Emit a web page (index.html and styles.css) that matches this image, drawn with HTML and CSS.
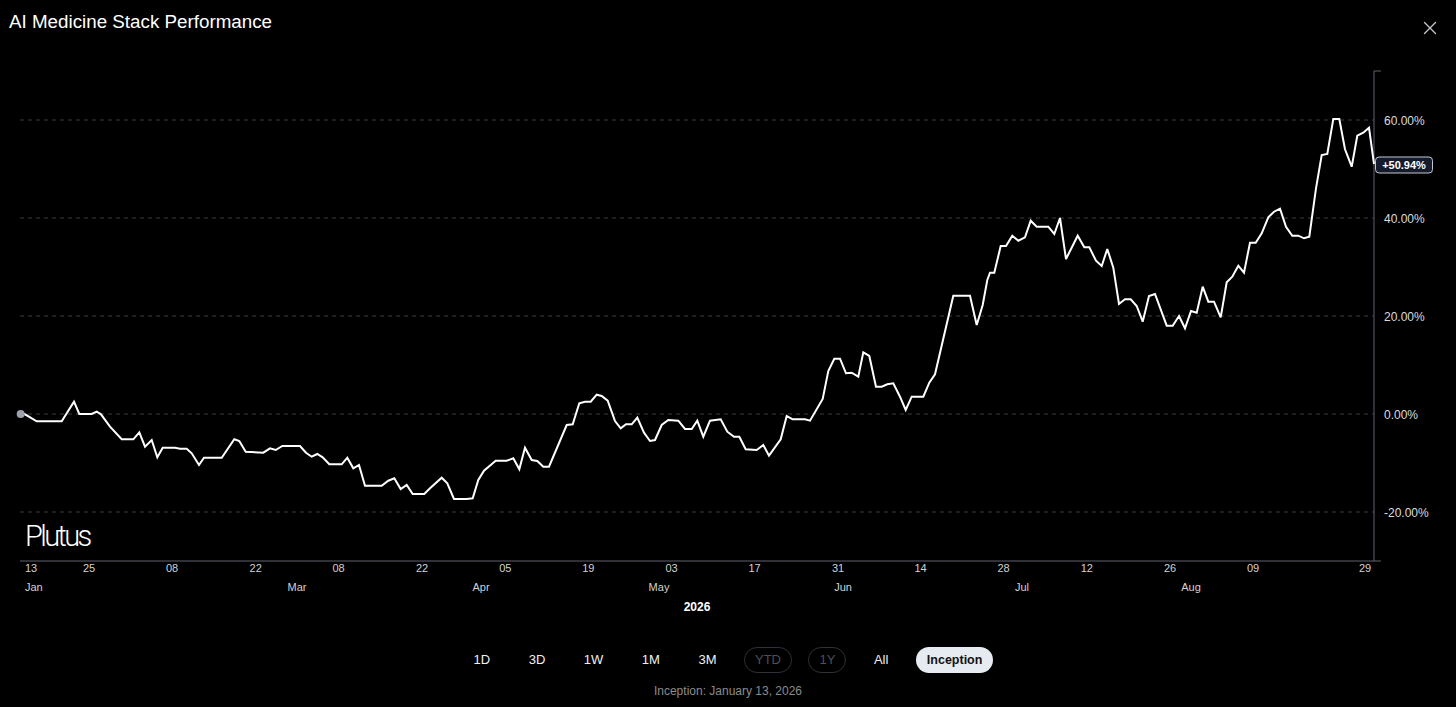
FILE: index.html
```html
<!DOCTYPE html>
<html lang="en">
<head>
<meta charset="utf-8">
<title>AI Medicine Stack Performance</title>
<link rel="stylesheet" href="styles.css">
</head>
<body>
<div class="app">
  <header class="header">
    <h1 class="title">AI Medicine Stack Performance</h1>
    <button class="close" aria-label="Close">
      <svg width="14" height="14" viewBox="0 0 14 14"><path d="M1.5 1.5 L12.5 12.5 M12.5 1.5 L1.5 12.5" class="close-x"/></svg>
    </button>
  </header>

  <svg class="chart" width="1456" height="570" viewBox="0 50 1456 570">
    <g class="grid">
      <line x1="20" y1="120" x2="1374" y2="120"/>
      <line x1="20" y1="218" x2="1374" y2="218"/>
      <line x1="20" y1="316" x2="1374" y2="316"/>
      <line x1="20" y1="414" x2="1374" y2="414"/>
      <line x1="20" y1="512" x2="1374" y2="512"/>
    </g>
    <g class="axis">
      <line x1="1374" y1="71" x2="1374" y2="561"/>
      <line x1="1374" y1="71" x2="1381" y2="71"/>
      <line x1="20" y1="561" x2="1381" y2="561"/>
    </g>
    <g class="ylab">
      <text x="1384" y="124.5">60.00%</text>
      <text x="1384" y="222.5">40.00%</text>
      <text x="1384" y="320.5">20.00%</text>
      <text x="1384" y="418.5">0.00%</text>
      <text x="1384" y="516.5">-20.00%</text>
    </g>
    <text class="logo" x="25" y="546">Plutus</text>
    <polyline class="line" points="20.7,414 25,414.3 36.7,421.3 61.7,421.3 74,401.7 79.3,414 91.7,414 96.7,411.7 101,414.3 110,426.7 121.7,439.3 133.3,439.3 139.3,432.3 145,446.7 151.7,440 157.3,457.3 162.7,447.7 175,447.7 180,448.7 186.7,448.7 191.7,453.3 199,465 204,457.7 221.7,457.7 234.3,439.3 239.3,441 245.7,451.7 263.3,452.7 270,448.3 275.7,450 282.3,446 300,446 306,452.7 311.7,456.7 317.3,454 322.7,457.3 329.3,464.3 341.7,464.3 347.3,457.7 353.3,468.3 359,465 365,485.7 381.7,485.7 388.3,480.7 394.3,478.3 400.7,489 406.7,485 412.7,494 424.3,494 430,488.3 441.7,477.7 447.3,483.3 454,499 466.7,499 472.7,498.3 478.3,480 484,470.7 495.7,460.7 506.7,460.7 513.3,458.3 519.3,469.3 525,447.7 531.7,460 537.3,461 543.3,466.7 549,466.7 566.7,425 572.7,424.3 579.3,403.3 585,401.7 590.7,401.7 596.7,394.7 601.7,396 607.7,400.7 615,421 620.7,428.3 626,424.3 631.7,424.3 637.3,417.7 644,432.7 650,441 655,440 661.7,425 668.3,420 678.3,420.7 685,429 691.7,429 697.3,420.7 703.3,436.7 710,420.7 720.7,419.3 727.3,431.7 734,436.7 739.3,436.7 745.7,449.3 756.7,450 763.3,445 769,455.7 780.7,439.3 786.7,416 792.7,419.3 805,419.3 810,420.7 822.7,399 828.3,371 834.3,358.7 840,358.7 846,373.3 851.7,372.7 858.3,376.7 863.3,352.3 869.3,356 876,386.7 881.7,386.7 887.3,384.3 893.3,383.3 900,396.7 905.7,410 911.7,396.7 923.3,396.7 929.3,382.7 935,374.3 953.3,295.7 970,295.7 976.7,325 982.7,305 987.3,280 990,272.7 994.3,272.7 1000.7,246 1006,246 1012.3,235.7 1018.3,240.7 1025,237.3 1030.7,220.7 1036.7,226.7 1048.3,226.7 1054.3,234 1060,218 1066,259 1077.7,235.7 1084.3,247.3 1089.3,247.3 1096,260.7 1101.7,266 1107.3,249 1113.3,267.7 1119,304 1125,299.3 1130.7,299.3 1136.7,306 1142.7,321.7 1149,296 1155,294 1166.7,325.7 1172.7,325.7 1179,316 1185,328.3 1191,311 1196.7,312.7 1202.7,286.7 1208.3,301.7 1214,301.7 1220.7,317.3 1226.7,282.3 1232.3,276.7 1238.3,265.7 1244,272.7 1250,242.7 1255.7,242.7 1261.7,233.3 1268.3,217.3 1274,211.7 1280,208.7 1286,226.7 1292.3,235.7 1298.3,235.7 1304,238.3 1309.3,236.7 1316,188.3 1321.7,155 1327.3,154 1333.3,119 1339.3,119 1345,149.3 1351.7,166.7 1357.3,135.7 1363.3,132.7 1369,127.7 1374,164"/>
    <circle class="start-dot" cx="20.7" cy="414" r="4"/>
    <rect class="badge" x="1375.5" y="157" width="57" height="16" rx="3.5"/>
    <text class="badge-text" x="1404" y="169">+50.94%</text>
    <g class="xlab">
      <text x="25" y="572.3" class="start">13</text>
      <text x="89" y="572.3">25</text>
      <text x="172.1" y="572.3">08</text>
      <text x="255.7" y="572.3">22</text>
      <text x="338.5" y="572.3">08</text>
      <text x="422" y="572.3">22</text>
      <text x="505.3" y="572.3">05</text>
      <text x="588.3" y="572.3">19</text>
      <text x="671.5" y="572.3">03</text>
      <text x="754.5" y="572.3">17</text>
      <text x="838" y="572.3">31</text>
      <text x="920.5" y="572.3">14</text>
      <text x="1003.5" y="572.3">28</text>
      <text x="1086.8" y="572.3">12</text>
      <text x="1170" y="572.3">26</text>
      <text x="1253" y="572.3">09</text>
      <text x="1365" y="572.3">29</text>
    </g>
    <g class="xlab">
      <text x="25" y="591" class="start">Jan</text>
      <text x="297" y="591">Mar</text>
      <text x="481" y="591">Apr</text>
      <text x="659" y="591">May</text>
      <text x="843" y="591">Jun</text>
      <text x="1022" y="591">Jul</text>
      <text x="1191" y="591">Aug</text>
    </g>
    <text class="year" x="697" y="611">2026</text>
  </svg>

  <nav class="ranges">
    <button class="range">1D</button>
    <button class="range">3D</button>
    <button class="range">1W</button>
    <button class="range">1M</button>
    <button class="range">3M</button>
    <button class="range disabled">YTD</button>
    <button class="range disabled">1Y</button>
    <button class="range">All</button>
    <button class="range active">Inception</button>
  </nav>
  <p class="since">Inception: January 13, 2026</p>
</div>
</body>
</html>
```

FILE: styles.css
```css
* { box-sizing: border-box; }

html, body {
  margin: 0;
  padding: 0;
  background: #000;
}

body {
  font-family: "Liberation Sans", Arial, sans-serif;
  color: #fff;
}

.app {
  width: 1456px;
  height: 707px;
  display: flex;
  flex-direction: column;
  overflow: hidden;
}

.header {
  height: 50px;
  display: flex;
  justify-content: space-between;
  align-items: flex-start;
  padding: 11px 19px 0 9px;
}

.title {
  margin: 0;
  font-size: 18.8px;
  line-height: 22px;
  font-weight: normal;
  color: #fff;
}

.close {
  margin-top: 10px;
  padding: 0;
  width: 14px;
  height: 14px;
  border: 0;
  background: none;
  display: block;
}

.close svg { display: block; }

.close-x {
  stroke: #c4c4c8;
  stroke-width: 1.4;
  fill: none;
  stroke-linecap: round;
}

.chart {
  display: block;
  flex: none;
}

.grid line {
  stroke: #3c3c40;
  stroke-width: 1;
  stroke-dasharray: 4 4;
}

.axis line {
  stroke: #5e6070;
  stroke-width: 1;
}

.ylab text {
  fill: #dcdcdc;
  font-size: 12px;
  font-family: "Liberation Sans", Arial, sans-serif;
}

.line {
  fill: none;
  stroke: #fff;
  stroke-width: 2;
  stroke-linejoin: miter;
  stroke-miterlimit: 3;
}

.start-dot {
  fill: #9ca1ad;
}

.badge {
  fill: #161b2b;
  stroke: #c3c8d6;
  stroke-width: 1;
}

.badge-text {
  fill: #fff;
  font-size: 11px;
  font-weight: bold;
  text-anchor: middle;
  font-family: "Liberation Sans", Arial, sans-serif;
}

.logo {
  fill: #fff;
  font-family: Roboto, "Liberation Sans", sans-serif;
  font-weight: 300;
  font-size: 29px;
  letter-spacing: -2.6px;
}

.xlab text {
  fill: #d2d2d2;
  font-size: 11px;
  text-anchor: middle;
  font-family: "Liberation Sans", Arial, sans-serif;
}

.xlab text.start { text-anchor: start; }

.year {
  fill: #fff;
  font-size: 12px;
  font-weight: bold;
  text-anchor: middle;
  font-family: "Liberation Sans", Arial, sans-serif;
}

.ranges {
  margin-top: 27px;
  display: flex;
  justify-content: center;
  gap: 16.5px;
}

.range {
  height: 26px;
  padding: 0 10px;
  border: 1px solid transparent;
  border-radius: 13px;
  background: transparent;
  color: #f0f0f0;
  font-family: "Liberation Sans", Arial, sans-serif;
  font-size: 13px;
  line-height: 24px;
}

.range.disabled {
  color: #4d4f57;
  border-color: #2f3038;
}

.range.active {
  background: #e6eaf1;
  color: #111;
  font-weight: bold;
  font-size: 12.5px;
}

.since {
  margin: 11px 0 0;
  text-align: center;
  font-size: 12px;
  line-height: 14px;
  color: #8c8c8c;
}
```
